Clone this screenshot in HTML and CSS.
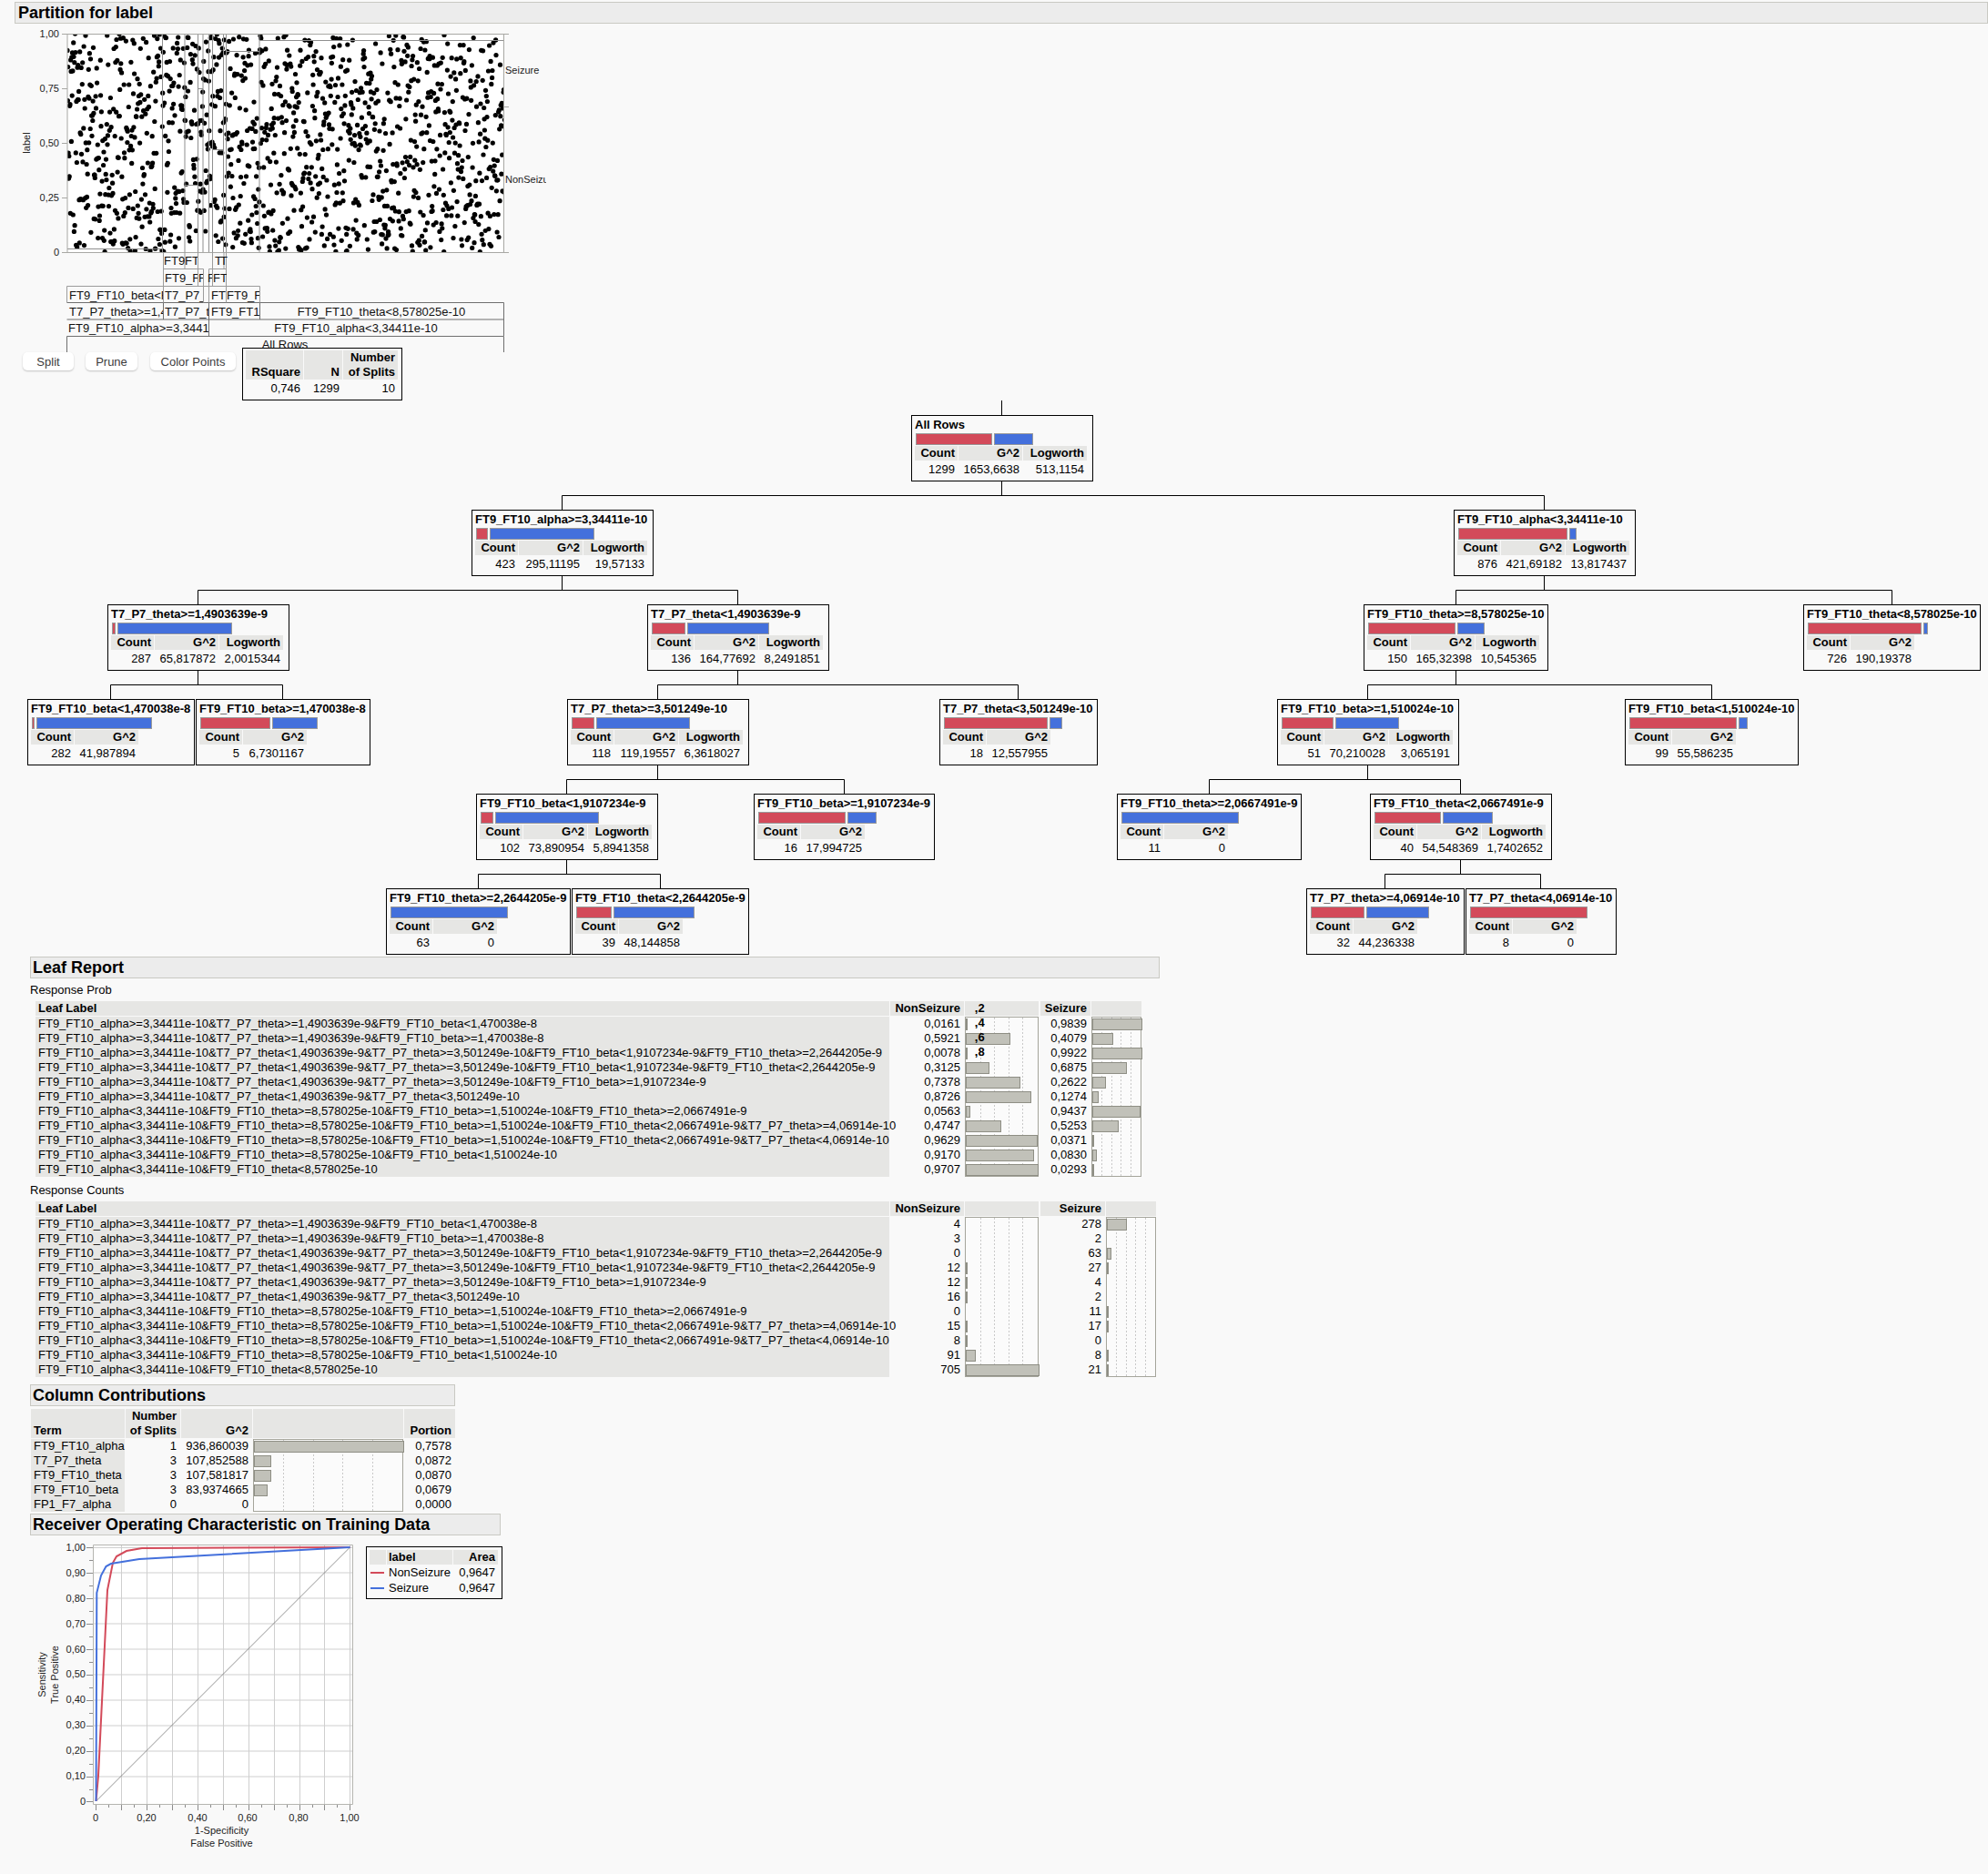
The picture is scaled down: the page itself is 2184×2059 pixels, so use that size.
FILE: index.html
```html
<!DOCTYPE html>
<html lang="en">
<head>
  <meta charset="UTF-8" />
  <title>Partition for label</title>
  <link rel="stylesheet" href="styles.css">
</head>
<body>
  <h1 class="outline outline-main">Partition for label</h1>

  <svg class="partition-plot" width="600" height="362" viewBox="0 26 600 362" xmlns="http://www.w3.org/2000/svg">
    <rect class="plot-bg" x="74" y="37" width="479.5" height="240" />
    <svg id="dots" x="74" y="37" width="479.5" height="240" viewBox="74 37 479.5 240"></svg>
    <path class="plot-split" d="M178.5 37V277M203 37V277M217.5 37V277M223 37V277M229.5 37V277M233.5 37V277M245.5 37V277M248.5 37V277M285 37V277M74 273.5H178.5M203 203.5H217.5M217.5 97.5H223M233.5 164.5H245.5M248.5 56.5H285M285 44.5H553.5" />
    <path class="plot-frame" d="M74 37V277M74 37.5H559M74 277.5H559M553.5 37V277M553.5 117.5H559M68 37.5H74M68 97.5H74M68 157.5H74M68 217.5H74M68 277.5H74" />
    <g class="axis-y">
      <text x="65" y="41">1,00</text>
      <text x="65" y="101">0,75</text>
      <text x="65" y="161">0,50</text>
      <text x="65" y="221">0,25</text>
      <text x="65" y="281">0</text>
    </g>
    <text class="axis-title" transform="translate(33 157) rotate(-90)">label</text>
    <text class="axis-level" x="555" y="81">Seizure</text>
    <text class="axis-level" x="555" y="201">NonSeizure</text>

    <!-- partition strips under the plot, lowest level first -->
    <path class="strip-dark" d="M73.5 387V369.5H553.5V387M73.5 351H553.5V369M229.5 351V369M73.5 332.5H553.5V351M179.5 332.5V351M229.5 332.5V351M285.5 332.5V351" />
    <path class="strip-light" d="M73.5 314.5H285.5V332.5M73.5 314.5V332.5M179.5 277V332.5M223.5 295.5V332.5M229.5 295.5V332.5M248.5 277V332.5M179.5 295.5H223.5M229.5 295.5H248.5M203 277V295.5M217.5 277V314.5M233.5 277V314.5M246 277V295.5" />

    <svg class="strip" x="73" y="369" width="481" height="19"><text x="240" y="14" text-anchor="middle">All Rows</text></svg>
    <svg class="strip" x="74" y="351" width="155" height="18"><text x="1" y="14">FT9_FT10_alpha&gt;=3,34411e-10</text></svg>
    <svg class="strip" x="230" y="351" width="323" height="18"><text x="161" y="14" text-anchor="middle">FT9_FT10_alpha&lt;3,34411e-10</text></svg>
    <svg class="strip" x="74" y="333" width="105" height="18"><text x="2" y="14">T7_P7_theta&gt;=1,4903639e-9</text></svg>
    <svg class="strip" x="180" y="333" width="49" height="18"><text x="1" y="14">T7_P7_theta</text></svg>
    <svg class="strip" x="230" y="333" width="55" height="18"><text x="2" y="14">FT9_FT10_theta</text></svg>
    <svg class="strip" x="286" y="333" width="267" height="18"><text x="133" y="14" text-anchor="middle">FT9_FT10_theta&lt;8,578025e-10</text></svg>
    <svg class="strip" x="74" y="315" width="105" height="18"><text x="2" y="14">FT9_FT10_beta&lt;F</text></svg>
    <svg class="strip" x="180" y="315" width="43" height="18"><text x="1" y="14">T7_P7_T</text></svg>
    <svg class="strip" x="230" y="315" width="18" height="18"><text x="2" y="14">FT9</text></svg>
    <svg class="strip" x="249" y="315" width="36" height="18"><text x="0" y="14">FT9_FT10</text></svg>
    <svg class="strip" x="180" y="296" width="37" height="18"><text x="1" y="14">FT9_FT10</text></svg>
    <svg class="strip" x="218" y="296" width="5" height="18"><text x="0" y="14">F</text></svg>
    <svg class="strip" x="228" y="296" width="5" height="18"><text x="0" y="14">F</text></svg>
    <svg class="strip" x="233" y="296" width="16" height="18"><text x="1" y="14">FT9</text></svg>
    <svg class="strip" x="180" y="277" width="23" height="18"><text x="0" y="14">FT9</text></svg>
    <svg class="strip" x="203" y="277" width="14" height="18"><text x="0" y="14">FT9</text></svg>
    <svg class="strip" x="235" y="277" width="11" height="18"><text x="1" y="14">T</text></svg>
    <svg class="strip" x="241" y="277" width="10" height="18"><text x="1" y="14">T</text></svg>
  </svg>

  <div class="controls">
    <button class="btn btn-split" type="button">Split</button>
    <button class="btn btn-prune" type="button">Prune</button>
    <button class="btn btn-color" type="button">Color Points</button>
    <div class="summary">
      <b class="sum-r">RSquare</b><b class="sum-n">N</b><b class="sum-s">Number<br>of Splits</b>
      <span>0,746</span><span>1299</span><span>10</span>
    </div>
  </div>

  <div class="tree">
    <svg class="tree-lines" width="2184" height="609" viewBox="0 456 2184 609" xmlns="http://www.w3.org/2000/svg">
      <path d="M1100.5 456V472M1100.5 545V560.5M617.5 576V560.5H1696.5V576" />
      <path d="M617.5 649V664.5M217.5 680V664.5H810.5V680M1696.5 649V664.5M1599.5 680V664.5H2078.5V680" />
      <path d="M217.5 753V768.5M121.5 784V768.5H310.5V784M810.5 753V768.5M722.5 784V768.5H1118.5V784M1599.5 753V768.5M1502.5 784V768.5H1880.5V784" />
      <path d="M722.5 857V872.5M622.5 888V872.5H927.5V888M1502.5 857V872.5M1328.5 888V872.5H1604.5V888" />
      <path d="M622.5 961V976.5M525.5 992V976.5H725.5V992M1604.5 961V976.5M1521.5 992V976.5H1692.5V992" />
    </svg>

    <div class="node lvl-0 n-root">
      <div class="node-title">All Rows</div>
      <div class="node-bars"><span class="bar red" style="width:82px"></span><span class="bar blue" style="width:41px"></span></div>
      <div class="node-stats"><b>Count</b><b>G^2</b><b>Logworth</b><span>1299</span><span>1653,6638</span><span>513,1154</span></div>
    </div>

    <div class="node lvl-1 n-a">
      <div class="node-title">FT9_FT10_alpha&gt;=3,34411e-10</div>
      <div class="node-bars"><span class="bar red" style="width:11px"></span><span class="bar blue" style="width:113px"></span></div>
      <div class="node-stats"><b>Count</b><b>G^2</b><b>Logworth</b><span>423</span><span>295,11195</span><span>19,57133</span></div>
    </div>
    <div class="node lvl-1 n-b">
      <div class="node-title">FT9_FT10_alpha&lt;3,34411e-10</div>
      <div class="node-bars"><span class="bar red" style="width:118px"></span><span class="bar blue" style="width:6px"></span></div>
      <div class="node-stats"><b>Count</b><b>G^2</b><b>Logworth</b><span>876</span><span>421,69182</span><span>13,817437</span></div>
    </div>

    <div class="node lvl-2 n-c">
      <div class="node-title">T7_P7_theta&gt;=1,4903639e-9</div>
      <div class="node-bars"><span class="bar red" style="width:2px"></span><span class="bar blue" style="width:124px"></span></div>
      <div class="node-stats"><b>Count</b><b>G^2</b><b>Logworth</b><span>287</span><span>65,817872</span><span>2,0015344</span></div>
    </div>
    <div class="node lvl-2 n-d">
      <div class="node-title">T7_P7_theta&lt;1,4903639e-9</div>
      <div class="node-bars"><span class="bar red" style="width:35px"></span><span class="bar blue" style="width:88px"></span></div>
      <div class="node-stats"><b>Count</b><b>G^2</b><b>Logworth</b><span>136</span><span>164,77692</span><span>8,2491851</span></div>
    </div>
    <div class="node lvl-2 n-e">
      <div class="node-title">FT9_FT10_theta&gt;=8,578025e-10</div>
      <div class="node-bars"><span class="bar red" style="width:94px"></span><span class="bar blue" style="width:28px"></span></div>
      <div class="node-stats"><b>Count</b><b>G^2</b><b>Logworth</b><span>150</span><span>165,32398</span><span>10,545365</span></div>
    </div>
    <div class="node lvl-2 n-f">
      <div class="node-title">FT9_FT10_theta&lt;8,578025e-10</div>
      <div class="node-bars"><span class="bar red" style="width:123px"></span><span class="bar blue" style="width:3px"></span></div>
      <div class="node-stats"><b>Count</b><b>G^2</b><i></i><span>726</span><span>190,19378</span></div>
    </div>

    <div class="node lvl-3 n-g">
      <div class="node-title">FT9_FT10_beta&lt;1,470038e-8</div>
      <div class="node-bars"><span class="bar red" style="width:1px"></span><span class="bar blue" style="width:125px"></span></div>
      <div class="node-stats"><b>Count</b><b>G^2</b><i></i><span>282</span><span>41,987894</span></div>
    </div>
    <div class="node lvl-3 n-h">
      <div class="node-title">FT9_FT10_beta&gt;=1,470038e-8</div>
      <div class="node-bars"><span class="bar red" style="width:75px"></span><span class="bar blue" style="width:48px"></span></div>
      <div class="node-stats"><b>Count</b><b>G^2</b><i></i><span>5</span><span>6,7301167</span></div>
    </div>
    <div class="node lvl-3 n-i">
      <div class="node-title">T7_P7_theta&gt;=3,501249e-10</div>
      <div class="node-bars"><span class="bar red" style="width:23px"></span><span class="bar blue" style="width:101px"></span></div>
      <div class="node-stats"><b>Count</b><b>G^2</b><b>Logworth</b><span>118</span><span>119,19557</span><span>6,3618027</span></div>
    </div>
    <div class="node lvl-3 n-j">
      <div class="node-title">T7_P7_theta&lt;3,501249e-10</div>
      <div class="node-bars"><span class="bar red" style="width:112px"></span><span class="bar blue" style="width:12px"></span></div>
      <div class="node-stats"><b>Count</b><b>G^2</b><i></i><span>18</span><span>12,557955</span></div>
    </div>
    <div class="node lvl-3 n-k">
      <div class="node-title">FT9_FT10_beta&gt;=1,510024e-10</div>
      <div class="node-bars"><span class="bar red" style="width:55px"></span><span class="bar blue" style="width:68px"></span></div>
      <div class="node-stats"><b>Count</b><b>G^2</b><b>Logworth</b><span>51</span><span>70,210028</span><span>3,065191</span></div>
    </div>
    <div class="node lvl-3 n-l">
      <div class="node-title">FT9_FT10_beta&lt;1,510024e-10</div>
      <div class="node-bars"><span class="bar red" style="width:116px"></span><span class="bar blue" style="width:8px"></span></div>
      <div class="node-stats"><b>Count</b><b>G^2</b><i></i><span>99</span><span>55,586235</span></div>
    </div>

    <div class="node lvl-4 n-m">
      <div class="node-title">FT9_FT10_beta&lt;1,9107234e-9</div>
      <div class="node-bars"><span class="bar red" style="width:12px"></span><span class="bar blue" style="width:112px"></span></div>
      <div class="node-stats"><b>Count</b><b>G^2</b><b>Logworth</b><span>102</span><span>73,890954</span><span>5,8941358</span></div>
    </div>
    <div class="node lvl-4 n-n">
      <div class="node-title">FT9_FT10_beta&gt;=1,9107234e-9</div>
      <div class="node-bars"><span class="bar red" style="width:94px"></span><span class="bar blue" style="width:30px"></span></div>
      <div class="node-stats"><b>Count</b><b>G^2</b><i></i><span>16</span><span>17,994725</span></div>
    </div>
    <div class="node lvl-4 n-o">
      <div class="node-title">FT9_FT10_theta&gt;=2,0667491e-9</div>
      <div class="node-bars"><span class="bar blue" style="width:127px"></span></div>
      <div class="node-stats"><b>Count</b><b>G^2</b><i></i><span>11</span><span>0</span></div>
    </div>
    <div class="node lvl-4 n-p">
      <div class="node-title">FT9_FT10_theta&lt;2,0667491e-9</div>
      <div class="node-bars"><span class="bar red" style="width:71px"></span><span class="bar blue" style="width:53px"></span></div>
      <div class="node-stats"><b>Count</b><b>G^2</b><b>Logworth</b><span>40</span><span>54,548369</span><span>1,7402652</span></div>
    </div>

    <div class="node lvl-5 n-q">
      <div class="node-title">FT9_FT10_theta&gt;=2,2644205e-9</div>
      <div class="node-bars"><span class="bar blue" style="width:127px"></span></div>
      <div class="node-stats"><b>Count</b><b>G^2</b><i></i><span>63</span><span>0</span></div>
    </div>
    <div class="node lvl-5 n-r">
      <div class="node-title">FT9_FT10_theta&lt;2,2644205e-9</div>
      <div class="node-bars"><span class="bar red" style="width:37px"></span><span class="bar blue" style="width:87px"></span></div>
      <div class="node-stats"><b>Count</b><b>G^2</b><i></i><span>39</span><span>48,144858</span></div>
    </div>
    <div class="node lvl-5 n-s">
      <div class="node-title">T7_P7_theta&gt;=4,06914e-10</div>
      <div class="node-bars"><span class="bar red" style="width:57px"></span><span class="bar blue" style="width:67px"></span></div>
      <div class="node-stats"><b>Count</b><b>G^2</b><i></i><span>32</span><span>44,236338</span></div>
    </div>
    <div class="node lvl-5 n-t">
      <div class="node-title">T7_P7_theta&lt;4,06914e-10</div>
      <div class="node-bars"><span class="bar red" style="width:127px"></span></div>
      <div class="node-stats"><b>Count</b><b>G^2</b><i></i><span>8</span><span>0</span></div>
    </div>
  </div>

  <section class="leaf-report">
    <h2 class="outline outline-leaf">Leaf Report</h2>
    <div class="caption">Response Prob</div>
    <div class="leaf-table">
      <div class="col col-label">
        <b>Leaf Label</b>
        <span>FT9_FT10_alpha&gt;=3,34411e-10&amp;T7_P7_theta&gt;=1,4903639e-9&amp;FT9_FT10_beta&lt;1,470038e-8</span>
        <span>FT9_FT10_alpha&gt;=3,34411e-10&amp;T7_P7_theta&gt;=1,4903639e-9&amp;FT9_FT10_beta&gt;=1,470038e-8</span>
        <span>FT9_FT10_alpha&gt;=3,34411e-10&amp;T7_P7_theta&lt;1,4903639e-9&amp;T7_P7_theta&gt;=3,501249e-10&amp;FT9_FT10_beta&lt;1,9107234e-9&amp;FT9_FT10_theta&gt;=2,2644205e-9</span>
        <span>FT9_FT10_alpha&gt;=3,34411e-10&amp;T7_P7_theta&lt;1,4903639e-9&amp;T7_P7_theta&gt;=3,501249e-10&amp;FT9_FT10_beta&lt;1,9107234e-9&amp;FT9_FT10_theta&lt;2,2644205e-9</span>
        <span>FT9_FT10_alpha&gt;=3,34411e-10&amp;T7_P7_theta&lt;1,4903639e-9&amp;T7_P7_theta&gt;=3,501249e-10&amp;FT9_FT10_beta&gt;=1,9107234e-9</span>
        <span>FT9_FT10_alpha&gt;=3,34411e-10&amp;T7_P7_theta&lt;1,4903639e-9&amp;T7_P7_theta&lt;3,501249e-10</span>
        <span>FT9_FT10_alpha&lt;3,34411e-10&amp;FT9_FT10_theta&gt;=8,578025e-10&amp;FT9_FT10_beta&gt;=1,510024e-10&amp;FT9_FT10_theta&gt;=2,0667491e-9</span>
        <span>FT9_FT10_alpha&lt;3,34411e-10&amp;FT9_FT10_theta&gt;=8,578025e-10&amp;FT9_FT10_beta&gt;=1,510024e-10&amp;FT9_FT10_theta&lt;2,0667491e-9&amp;T7_P7_theta&gt;=4,06914e-10</span>
        <span>FT9_FT10_alpha&lt;3,34411e-10&amp;FT9_FT10_theta&gt;=8,578025e-10&amp;FT9_FT10_beta&gt;=1,510024e-10&amp;FT9_FT10_theta&lt;2,0667491e-9&amp;T7_P7_theta&lt;4,06914e-10</span>
        <span>FT9_FT10_alpha&lt;3,34411e-10&amp;FT9_FT10_theta&gt;=8,578025e-10&amp;FT9_FT10_beta&lt;1,510024e-10</span>
        <span>FT9_FT10_alpha&lt;3,34411e-10&amp;FT9_FT10_theta&lt;8,578025e-10</span>
      </div>
      <div class="col col-num w-81">
        <b>NonSeizure</b>
        <span>0,0161</span><span>0,5921</span><span>0,0078</span><span>0,3125</span><span>0,7378</span><span>0,8726</span><span>0,0563</span><span>0,4747</span><span>0,9629</span><span>0,9170</span><span>0,9707</span>
      </div>
      <div class="col col-bars w-81">
        <b class="scale"><em>,2</em><em>,4</em><em>,6</em><em>,8</em></b>
        <div class="frame">
          <i style="width:1px"></i><i style="width:49px"></i><i style="width:1px"></i><i style="width:26px"></i><i style="width:60px"></i><i style="width:72px"></i><i style="width:5px"></i><i style="width:39px"></i><i style="width:79px"></i><i style="width:75px"></i><i style="width:80px"></i>
        </div>
      </div>
      <div class="col col-num w-56 col-gap">
        <b>Seizure</b>
        <span>0,9839</span><span>0,4079</span><span>0,9922</span><span>0,6875</span><span>0,2622</span><span>0,1274</span><span>0,9437</span><span>0,5253</span><span>0,0371</span><span>0,0830</span><span>0,0293</span>
      </div>
      <div class="col col-bars w-56">
        <b>&nbsp;</b>
        <div class="frame">
          <i style="width:55px"></i><i style="width:23px"></i><i style="width:55px"></i><i style="width:38px"></i><i style="width:15px"></i><i style="width:7px"></i><i style="width:53px"></i><i style="width:29px"></i><i style="width:2px"></i><i style="width:5px"></i><i style="width:2px"></i>
        </div>
      </div>
    </div>

    <div class="caption">Response Counts</div>
    <div class="leaf-table">
      <div class="col col-label">
        <b>Leaf Label</b>
        <span>FT9_FT10_alpha&gt;=3,34411e-10&amp;T7_P7_theta&gt;=1,4903639e-9&amp;FT9_FT10_beta&lt;1,470038e-8</span>
        <span>FT9_FT10_alpha&gt;=3,34411e-10&amp;T7_P7_theta&gt;=1,4903639e-9&amp;FT9_FT10_beta&gt;=1,470038e-8</span>
        <span>FT9_FT10_alpha&gt;=3,34411e-10&amp;T7_P7_theta&lt;1,4903639e-9&amp;T7_P7_theta&gt;=3,501249e-10&amp;FT9_FT10_beta&lt;1,9107234e-9&amp;FT9_FT10_theta&gt;=2,2644205e-9</span>
        <span>FT9_FT10_alpha&gt;=3,34411e-10&amp;T7_P7_theta&lt;1,4903639e-9&amp;T7_P7_theta&gt;=3,501249e-10&amp;FT9_FT10_beta&lt;1,9107234e-9&amp;FT9_FT10_theta&lt;2,2644205e-9</span>
        <span>FT9_FT10_alpha&gt;=3,34411e-10&amp;T7_P7_theta&lt;1,4903639e-9&amp;T7_P7_theta&gt;=3,501249e-10&amp;FT9_FT10_beta&gt;=1,9107234e-9</span>
        <span>FT9_FT10_alpha&gt;=3,34411e-10&amp;T7_P7_theta&lt;1,4903639e-9&amp;T7_P7_theta&lt;3,501249e-10</span>
        <span>FT9_FT10_alpha&lt;3,34411e-10&amp;FT9_FT10_theta&gt;=8,578025e-10&amp;FT9_FT10_beta&gt;=1,510024e-10&amp;FT9_FT10_theta&gt;=2,0667491e-9</span>
        <span>FT9_FT10_alpha&lt;3,34411e-10&amp;FT9_FT10_theta&gt;=8,578025e-10&amp;FT9_FT10_beta&gt;=1,510024e-10&amp;FT9_FT10_theta&lt;2,0667491e-9&amp;T7_P7_theta&gt;=4,06914e-10</span>
        <span>FT9_FT10_alpha&lt;3,34411e-10&amp;FT9_FT10_theta&gt;=8,578025e-10&amp;FT9_FT10_beta&gt;=1,510024e-10&amp;FT9_FT10_theta&lt;2,0667491e-9&amp;T7_P7_theta&lt;4,06914e-10</span>
        <span>FT9_FT10_alpha&lt;3,34411e-10&amp;FT9_FT10_theta&gt;=8,578025e-10&amp;FT9_FT10_beta&lt;1,510024e-10</span>
        <span>FT9_FT10_alpha&lt;3,34411e-10&amp;FT9_FT10_theta&lt;8,578025e-10</span>
      </div>
      <div class="col col-num w-81">
        <b>NonSeizure</b>
        <span>4</span><span>3</span><span>0</span><span>12</span><span>12</span><span>16</span><span>0</span><span>15</span><span>8</span><span>91</span><span>705</span>
      </div>
      <div class="col col-bars w-81">
        <b>&nbsp;</b>
        <div class="frame">
          <i class="none"></i><i class="none"></i><i class="none"></i><i style="width:1px"></i><i style="width:1px"></i><i style="width:2px"></i><i class="none"></i><i style="width:2px"></i><i style="width:1px"></i><i style="width:11px"></i><i style="width:81px"></i>
        </div>
      </div>
      <div class="col col-num w-71 col-gap">
        <b>Seizure</b>
        <span>278</span><span>2</span><span>63</span><span>27</span><span>4</span><span>2</span><span>11</span><span>17</span><span>0</span><span>8</span><span>21</span>
      </div>
      <div class="col col-bars w-55">
        <b>&nbsp;</b>
        <div class="frame">
          <i style="width:22px"></i><i class="none"></i><i style="width:5px"></i><i style="width:2px"></i><i class="none"></i><i class="none"></i><i style="width:1px"></i><i style="width:1px"></i><i class="none"></i><i style="width:1px"></i><i style="width:2px"></i>
        </div>
      </div>
    </div>
  </section>

  <section class="contrib">
    <h2 class="outline outline-contrib">Column Contributions</h2>
    <div class="contrib-table">
      <div class="col c-term">
        <b>Term</b>
        <span>FT9_FT10_alpha</span><span>T7_P7_theta</span><span>FT9_FT10_theta</span><span>FT9_FT10_beta</span><span>FP1_F7_alpha</span>
      </div>
      <div class="col col-num c-splits">
        <b>Number<br>of Splits</b>
        <span>1</span><span>3</span><span>3</span><span>3</span><span>0</span>
      </div>
      <div class="col col-num c-g2">
        <b>G^2</b>
        <span>936,860039</span><span>107,852588</span><span>107,581817</span><span>83,9374665</span><span>0</span>
      </div>
      <div class="col col-bars c-bars">
        <b>&nbsp;</b>
        <div class="frame">
          <i style="width:165px"></i><i style="width:19px"></i><i style="width:19px"></i><i style="width:15px"></i><i class="none"></i>
        </div>
      </div>
      <div class="col col-num c-portion">
        <b>Portion</b>
        <span>0,7578</span><span>0,0872</span><span>0,0870</span><span>0,0679</span><span>0,0000</span>
      </div>
    </div>
  </section>

  <section class="roc">
    <h2 class="outline outline-roc">Receiver Operating Characteristic on Training Data</h2>
    <div class="roc-body">
      <svg class="roc-plot" width="400" height="345" viewBox="0 1705 400 345" xmlns="http://www.w3.org/2000/svg">
        <rect class="roc-bg" x="102.5" y="1715.5" width="285" height="285" />
        <path class="roc-grid" d="M133.5 1716V2000M161.5 1716V2000M189.5 1716V2000M217.5 1716V2000M245.5 1716V2000M273.5 1716V2000M301.5 1716V2000M329.5 1716V2000M356.5 1716V2000M384.5 1716V2000M103 1746H387M103 1774H387M103 1802H387M103 1830H387M103 1858H387M103 1886H387M103 1914H387M103 1942H387M103 1970H387M103 1718.5H387" />
        <path class="roc-frame" d="M102.5 1715.5H387.5V2000.5H102.5Z" />
        <path class="roc-ticks" d="M95 1718.5H102M95 1746.5H102M95 1774.5H102M95 1802.5H102M95 1830.5H102M95 1858.5H102M95 1886.5H102M95 1914.5H102M95 1942.5H102M95 1970.5H102M95 1997.5H102M98 1732.5H102M98 1760.5H102M98 1788.5H102M98 1816.5H102M98 1844.5H102M98 1872.5H102M98 1900.5H102M98 1928.5H102M98 1956.5H102M98 1984.5H102M105.5 2001V2007M133.5 2001V2007M161.5 2001V2007M189.5 2001V2007M217.5 2001V2007M245.5 2001V2007M273.5 2001V2007M301.5 2001V2007M329.5 2001V2007M356.5 2001V2007M384.5 2001V2007M119.5 2001V2004M147.5 2001V2004M175.5 2001V2004M203.5 2001V2004M231.5 2001V2004M259.5 2001V2004M287.5 2001V2004M315.5 2001V2004M343.5 2001V2004M370.5 2001V2004" />
        <path class="roc-diag" d="M105.5 1997L384.5 1718" />
        <path class="roc-red" d="M105.5 1997L108 1969L118 1765L124 1735L128 1728L139 1722L156 1719L384.5 1718" />
        <path class="roc-blue" d="M105.5 1997L106.3 1768L111 1749L116.5 1739L122 1736L153 1731L384.5 1718" />
        <g class="axis-y">
          <text x="94" y="1722">1,00</text>
          <text x="94" y="1750">0,90</text>
          <text x="94" y="1778">0,80</text>
          <text x="94" y="1806">0,70</text>
          <text x="94" y="1834">0,60</text>
          <text x="94" y="1861">0,50</text>
          <text x="94" y="1889">0,40</text>
          <text x="94" y="1917">0,30</text>
          <text x="94" y="1945">0,20</text>
          <text x="94" y="1973">0,10</text>
          <text x="94" y="2001">0</text>
        </g>
        <g class="axis-x">
          <text x="105" y="2019">0</text>
          <text x="161" y="2019">0,20</text>
          <text x="217" y="2019">0,40</text>
          <text x="272" y="2019">0,60</text>
          <text x="328" y="2019">0,80</text>
          <text x="384" y="2019">1,00</text>
          <text x="243.5" y="2033">1-Specificity</text>
          <text x="243.5" y="2047">False Positive</text>
        </g>
        <text class="axis-title" transform="translate(50 1858) rotate(-90)">Sensitivity</text>
        <text class="axis-title" transform="translate(64 1858) rotate(-90)">True Positive</text>
      </svg>
      <div class="legend">
        <b></b><b class="left">label</b><b>Area</b>
        <i class="swatch swatch-red"></i><span class="left">NonSeizure</span><span>0,9647</span>
        <i class="swatch swatch-blue"></i><span class="left">Seizure</span><span>0,9647</span>
      </div>
    </div>
  </section>

  <script src="script.js"></script>
</body>
</html>
```

FILE: styles.css
```css
* {
  box-sizing: border-box;
  margin: 0;
  padding: 0;
}
body {
  font-family: "Liberation Sans", Arial, sans-serif;
  font-size: 13px;
  color: #000;
  background: #f9f9f9;
  width: 2184px;
  min-height: 2059px;
  overflow-x: hidden;
}
svg {
  display: block;
}
svg text {
  font-family: "Liberation Sans", Arial, sans-serif;
}
b {
  font-weight: 700;
}

/* outline headers */
.outline {
  font-size: 18px;
  font-weight: 700;
  line-height: 22px;
  height: 24px;
  padding-left: 2px;
  background: #ececec;
  border: 1px solid #c9c9c3;
}
.outline-main {
  margin: 2px 0 0 16px;
  padding-left: 3px;
  width: 2168px;
}
.outline-leaf {
  width: 1241px;
}
.outline-contrib {
  width: 467px;
}
.outline-roc {
  width: 517px;
}

/* partition plot */
.plot-bg {
  fill: #fff;
}
.plot-split {
  fill: none;
  stroke: #8f8f8f;
  stroke-width: 1;
}
.plot-frame {
  fill: none;
  stroke: #a8a8a4;
  stroke-width: 1;
}
.axis-y text {
  font-size: 11px;
  text-anchor: end;
  fill: #222;
}
.axis-x text {
  font-size: 11px;
  text-anchor: middle;
  fill: #222;
}
.axis-title {
  font-size: 11px;
  text-anchor: middle;
  fill: #222;
}
.axis-level {
  font-size: 11px;
  fill: #222;
}
.strip text {
  font-size: 13px;
  fill: #111;
}
.strip-dark {
  fill: none;
  stroke: #6f6f6f;
  stroke-width: 1;
}
.strip-light {
  fill: none;
  stroke: #9c9c9c;
  stroke-width: 1;
}

/* buttons and summary */
.controls {
  position: relative;
  height: 68px;
  margin-top: -16px;
  padding: 15px 0 0 25px;
  display: flex;
  align-items: flex-start;
}
.btn {
  height: 20px;
  border: none;
  border-radius: 5px;
  background: #fff;
  box-shadow: 0 1px 2px rgba(0,0,0,0.22);
  font-family: "Liberation Sans", Arial, sans-serif;
  font-size: 13px;
  color: #3c3c3c;
}
.btn-split {
  width: 56px;
  margin-right: 13px;
}
.btn-prune {
  width: 57px;
  margin-right: 14px;
}
.btn-color {
  width: 94px;
  margin-right: 7px;
}
.summary {
  margin-top: -5px;
  width: 176px;
  height: 58px;
  border: 1px solid #000;
  padding: 2px 4px 0 3px;
  display: grid;
  grid-template-columns: 63px 42px 60px;
  grid-template-rows: 32px 20px;
  column-gap: 1px;
  align-items: end;
  text-align: right;
}
.summary b {
  background: #e6e6e4;
  height: 32px;
  padding: 1px 3px 0 0;
  line-height: 16px;
  display: flex;
  flex-direction: column;
  justify-content: flex-end;
}
.summary span {
  padding-right: 3px;
  line-height: 20px;
}

/* tree */
.tree {
  position: relative;
  height: 609px;
}
.tree-lines {
  position: absolute;
  left: 0;
  top: 0;
}
.tree-lines path {
  fill: none;
  stroke: #000;
  stroke-width: 1;
}
.node {
  position: absolute;
  height: 73px;
  padding: 0 3px;
  border: 1px solid #000;
  background: #f9f9f9;
  white-space: nowrap;
  overflow: hidden;
}
.node-title {
  font-weight: 700;
  line-height: 19px;
  height: 19px;
}
.node-bars {
  display: flex;
  gap: 2px;
  height: 13px;
  padding-left: 1px;
}
.bar {
  display: block;
  height: 13px;
  border: 1px solid #9a9a9a;
  box-sizing: content-box;
  height: 11px;
}
.red {
  background: #d34a5a;
}
.blue {
  background: #4470dc;
}
.node-stats {
  margin-top: 1px;
  display: grid;
  grid-template-columns: 47px 70px 70px;
  column-gap: 1px;
  text-align: right;
}
.node-stats b {
  background: #e6e6e4;
  line-height: 16px;
  height: 16px;
  padding-right: 3px;
}
.node-stats i {
  display: block;
}
.node-stats span {
  line-height: 20px;
  padding-right: 3px;
}

.lvl-0 { top: 16px; }
.lvl-1 { top: 120px; }
.lvl-2 { top: 224px; }
.lvl-3 { top: 328px; }
.lvl-4 { top: 432px; }
.lvl-5 { top: 536px; }

.n-root { left: 1001px; width: 200px; }
.n-a { left: 518px; width: 200px; }
.n-b { left: 1597px; width: 200px; }
.n-c { left: 118px; width: 200px; }
.n-d { left: 711px; width: 200px; }
.n-e { left: 1498px; width: 203px; }
.n-f { left: 1981px; width: 195px; }
.n-g { left: 30px; width: 184px; }
.n-h { left: 215px; width: 192px; }
.n-i { left: 623px; width: 200px; }
.n-j { left: 1032px; width: 174px; }
.n-k { left: 1403px; width: 200px; }
.n-l { left: 1785px; width: 191px; }
.n-m { left: 523px; width: 200px; }
.n-n { left: 828px; width: 199px; }
.n-o { left: 1227px; width: 203px; }
.n-p { left: 1505px; width: 200px; }
.n-q { left: 424px; width: 203px; }
.n-r { left: 628px; width: 195px; }
.n-s { left: 1435px; width: 174px; }
.n-t { left: 1610px; width: 166px; }

/* report tables */
.leaf-report {
  margin: 2px 0 0 33px;
}
.caption {
  margin-top: 3px;
  line-height: 19px;
  height: 19px;
}
.leaf-table {
  margin: 3px 0 0 6px;
  display: flex;
  gap: 1px;
  margin-bottom: 5px;
}
.col b {
  display: block;
  background: #e6e6e4;
  height: 16px;
  line-height: 16px;
  margin-bottom: 1px;
  white-space: nowrap;
}
.col span {
  display: block;
  height: 16px;
  line-height: 16px;
  white-space: nowrap;
}
.col-label {
  width: 938px;
}
.col-label b {
  padding-left: 3px;
}
.col-label span {
  background: #e6e6e4;
  padding-left: 3px;
}
.col-num {
  text-align: right;
}
.col-num b,
.col-num span {
  padding-right: 4px;
}
.w-81 { width: 81px; }
.w-56 { width: 55px; }
.w-55 { width: 55px; }
.w-71 { width: 71px; }
.col-gap {
  margin-left: 1px;
}
.scale {
  display: flex;
  padding-left: 8px;
}
.scale em {
  display: block;
  width: 16.5px;
  font-style: normal;
  text-align: center;
}
.frame {
  border: 1px solid #a5a59b;
  padding-top: 1px;
  background-color: #fbfbfb;
  background-repeat: repeat-y;
  background-size: 1px 4px;
  background-image:
    linear-gradient(#c9c9c9 50%, transparent 50%),
    linear-gradient(#c9c9c9 50%, transparent 50%),
    linear-gradient(#c9c9c9 50%, transparent 50%),
    linear-gradient(#c9c9c9 50%, transparent 50%);
  background-position: 20% 0, 40% 0, 60% 0, 80% 0;
}
.frame i {
  display: block;
  height: 13px;
  margin-bottom: 3px;
  background: #c1c1b9;
  border: 1px solid #8e8e84;
}
.frame i:last-child {
  margin-bottom: 0;
}
.frame .none {
  background: none;
  border: none;
}

.contrib {
  margin: 8px 0 0 33px;
}
.contrib-table {
  display: flex;
  gap: 1px;
  margin: 3px 0 0 1px;
}
.contrib-table .col b {
  height: 32px;
  line-height: 16px;
  display: flex;
  flex-direction: column;
  justify-content: flex-end;
}
.c-term { width: 103px; }
.c-term b,
.c-term span {
  padding-left: 3px;
}
.c-term span {
  background: #e6e6e4;
}
.c-splits { width: 60px; }
.c-g2 { width: 78px; }
.c-bars { width: 165px; }
.c-portion { width: 56px; }
.c-splits b,
.c-g2 b,
.c-portion b {
  align-items: flex-end;
}
.contrib-table .frame {
  background-position: 20% 0, 40% 0, 60% 0, 80% 0;
  height: 80px;
}

.roc {
  margin: 2px 0 0 33px;
}
.roc-body {
  margin-left: -33px;
  display: flex;
  align-items: flex-start;
}
.roc-bg {
  fill: #fff;
}
.roc-grid {
  fill: none;
  stroke: #cfcfcf;
  stroke-width: 1;
}
.roc-frame {
  fill: none;
  stroke: #b5b5b0;
  stroke-width: 1;
}
.roc-ticks {
  fill: none;
  stroke: #8c8c8c;
  stroke-width: 1;
}
.roc-diag {
  fill: none;
  stroke: #777;
  stroke-width: 0.8;
}
.roc-red {
  fill: none;
  stroke: #d34a5a;
  stroke-width: 2;
}
.roc-blue {
  fill: none;
  stroke: #4470dc;
  stroke-width: 2;
}
.legend {
  margin: 12px 0 0 2px;
  width: 150px;
  height: 58px;
  border: 1px solid #000;
  padding: 3px 4px 0 3px;
  display: grid;
  grid-template-columns: 18px 72px 49px;
  grid-template-rows: 16px 17px 17px;
  column-gap: 1px;
  text-align: right;
  line-height: 16px;
  align-items: center;
}
.legend b {
  background: #e6e6e4;
  height: 16px;
  padding-right: 3px;
}
.legend span {
  padding-right: 3px;
}
.legend .left {
  text-align: left;
  padding-left: 2px;
}
.swatch {
  display: block;
  height: 2px;
  margin-left: 1px;
  width: 15px;
}
.swatch-red {
  background: #d34a5a;
}
.swatch-blue {
  background: #4470dc;
}
```

FILE: script.js
```js
// scatter of the 1299 rows, x is evenly spaced, y is random
var dots = document.getElementById("dots");
var seed = 20231;

function rnd() {
  seed = (seed * 1664525 + 1013904223) % 4294967296;
  return seed / 4294967296;
}

var parts = "";
for (var i = 0; i < 1299; i++) {
  var x = 74 + i * 0.37;
  var y = 37 + rnd() * 240;
  parts += '<circle cx="' + x.toFixed(1) + '" cy="' + y.toFixed(1) + '" r="2.6" />';
}
dots.innerHTML = parts;
```
